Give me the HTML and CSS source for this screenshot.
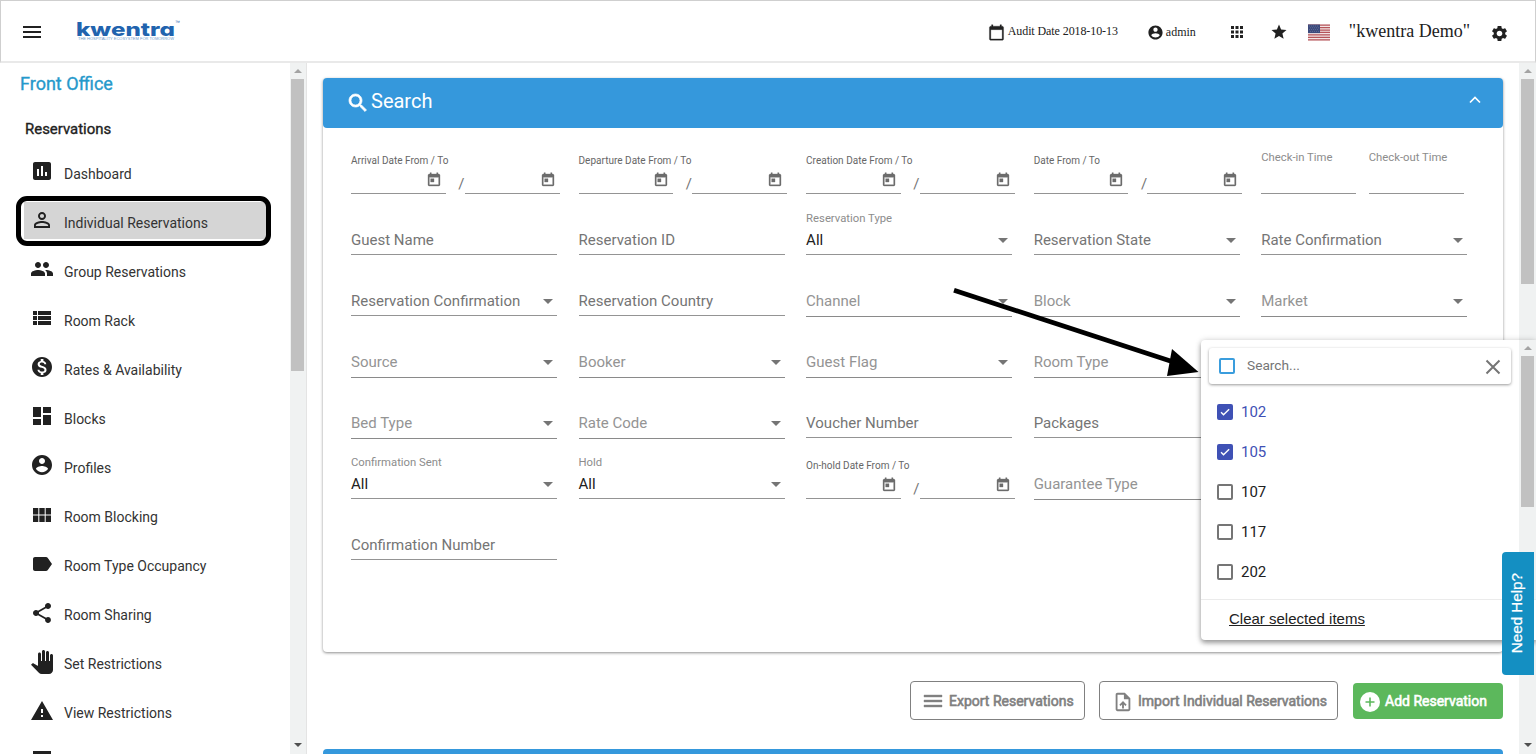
FILE: index.html
```html
<!DOCTYPE html>
<html lang="en">
<head>
<meta charset="utf-8">
<title>kwentra - Individual Reservations</title>
<link rel="stylesheet" href="styles.css">
</head>
<body>
<svg class="defs" aria-hidden="true">
  <symbol id="menu" viewBox="0 0 24 24"><path d="M3 18h18v-2H3v2zm0-5h18v-2H3v2zm0-7v2h18V6H3z"/></symbol>
  <symbol id="calendar" viewBox="0 0 24 24"><path d="M20 3h-1V1h-2v2H7V1H5v2H4c-1.1 0-2 .9-2 2v16c0 1.1.9 2 2 2h16c1.1 0 2-.9 2-2V5c0-1.1-.9-2-2-2zm0 18H4V8h16v13z"/></symbol>
  <symbol id="today" viewBox="0 0 24 24"><path d="M19 3h-1V1h-2v2H8V1H6v2H5c-1.11 0-2 .9-2 2v14c0 1.1.89 2 2 2h14c1.1 0 2-.9 2-2V5c0-1.1-.9-2-2-2zm0 16H5V8h14v11zM7 10h5v5H7z"/></symbol>
  <symbol id="account" viewBox="0 0 24 24"><path d="M12 2C6.48 2 2 6.480 2 12s4.480 10 10 10 10-4.480 10-10S17.520 2 12 2zm0 3c1.660 0 3 1.340 3 3s-1.340 3-3 3-3-1.340-3-3 1.340-3 3-3zm0 14.200c-2.500 0-4.710-1.280-6-3.220.03-1.990 4-3.080 6-3.080 1.990 0 5.970 1.090 6 3.080-1.290 1.940-3.500 3.220-6 3.220z"/></symbol>
  <symbol id="apps" viewBox="0 0 24 24"><path d="M4 8h4V4H4v4zm6 12h4v-4h-4v4zm-6 0h4v-4H4v4zm0-6h4v-4H4v4zm6 0h4v-4h-4v4zm6-10v4h4V4h-4zm-6 4h4V4h-4v4zm6 6h4v-4h-4v4zm0 6h4v-4h-4v4z"/></symbol>
  <symbol id="star" viewBox="0 0 24 24"><path d="M12 17.270L18.180 21l-1.640-7.030L22 9.240l-7.190-.61L12 2 9.190 8.630 2 9.240l5.460 4.730L5.820 21z"/></symbol>
  <symbol id="gear" viewBox="0 0 24 24"><path d="M19.140 12.940c.04-.3.06-.61.06-.94 0-.32-.02-.64-.07-.94l2.030-1.580c.18-.14.23-.41.12-.61l-1.920-3.320c-.12-.22-.37-.29-.59-.22l-2.390.96c-.5-.38-1.030-.7-1.620-.94l-.36-2.540c-.04-.24-.24-.41-.48-.41h-3.840c-.24 0-.43.17-.47.41l-.36 2.540c-.59.24-1.130.57-1.620.94l-2.390-.96c-.22-.08-.47 0-.59.22L2.740 8.870c-.12.21-.08.47.12.61l2.030 1.580c-.05.3-.09.63-.09.94s.02.64.07.94l-2.030 1.580c-.18.14-.23.41-.12.61l1.920 3.320c.12.22.37.29.59.22l2.390-.96c.5.38 1.030.7 1.620.94l.36 2.540c.05.24.24.41.48.41h3.840c.24 0 .44-.17.47-.41l.36-2.540c.59-.24 1.130-.56 1.620-.94l2.390.96c.22.08.47 0 .59-.22l1.920-3.320c.12-.22.07-.47-.12-.61l-2.010-1.580zM12 15.600c-1.980 0-3.600-1.620-3.600-3.600s1.620-3.600 3.600-3.600 3.600 1.620 3.600 3.600-1.620 3.600-3.600 3.600z"/></symbol>
  <symbol id="chart" viewBox="0 0 24 24"><path d="M19 3H5c-1.100 0-2 .9-2 2v14c0 1.100.9 2 2 2h14c1.100 0 2-.9 2-2V5c0-1.100-.9-2-2-2zM9 17H7v-7h2v7zm4 0h-2V7h2v10zm4 0h-2v-4h2v4z"/></symbol>
  <symbol id="person" viewBox="0 0 24 24"><path d="M12 5.900a2.100 2.100 0 1 1 0 4.200 2.100 2.100 0 0 1 0-4.200m0 9c2.970 0 6.100 1.460 6.100 2.100v1.100H5.900V17c0-.64 3.130-2.100 6.100-2.100M12 4C9.790 4 8 5.790 8 8s1.790 4 4 4 4-1.790 4-4-1.790-4-4-4zm0 9c-2.670 0-8 1.340-8 4v3h16v-3c0-2.660-5.330-4-8-4z"/></symbol>
  <symbol id="group" viewBox="0 0 24 24"><path d="M16 11c1.660 0 2.990-1.340 2.990-3S17.660 5 16 5s-3 1.340-3 3 1.340 3 3 3zm-8 0c1.660 0 2.990-1.340 2.990-3S9.660 5 8 5 5 6.340 5 8s1.340 3 3 3zm0 2c-2.330 0-7 1.170-7 3.500V19h14v-2.500c0-2.330-4.670-3.500-7-3.500zm8 0c-.29 0-.62.02-.97.05 1.160.84 1.970 1.970 1.970 3.450V19h6v-2.500c0-2.330-4.670-3.500-7-3.500z"/></symbol>
  <symbol id="rack" viewBox="0 0 24 24"><path d="M3 9h4V5H3v4zm0 5h4v-4H3v4zm5 0h13v-4H8v4zM3 19h4v-4H3v4zm5 0h13v-4H8v4zM8 5v4h13V5H8z"/></symbol>
  <symbol id="money" viewBox="0 0 24 24"><path d="M12 2C6.480 2 2 6.480 2 12s4.480 10 10 10 10-4.480 10-10S17.520 2 12 2zm1.410 16.090V20h-2.670v-1.930c-1.710-.36-3.160-1.460-3.270-3.400h1.960c.1 1.050.82 1.870 2.650 1.870 1.960 0 2.400-.98 2.400-1.590 0-.83-.44-1.610-2.670-2.140-2.480-.6-4.180-1.620-4.180-3.670 0-1.720 1.390-2.840 3.110-3.210V4h2.670v1.950c1.860.45 2.790 1.860 2.850 3.390H14.300c-.05-1.110-.64-1.870-2.220-1.870-1.500 0-2.400.68-2.400 1.640 0 .84.65 1.390 2.670 1.910s4.180 1.390 4.180 3.910c-.01 1.830-1.380 2.830-3.120 3.160z"/></symbol>
  <symbol id="blocks" viewBox="0 0 24 24"><path d="M3 13h8V3H3v10zm0 8h8v-6H3v6zm10 0h8V11h-8v10zm0-18v6h8V3h-8z"/></symbol>
  <symbol id="module" viewBox="0 0 24 24"><path d="M3 11.500h5.300V5H3v6.500zM3 19h5.300v-6.500H3V19zm6.300 0h5.400v-6.500H9.300V19zm6.400 0H21v-6.500h-5.300V19zm-6.400-7.500h5.400V5H9.300v6.500zM15.700 5v6.500H21V5h-5.300z"/></symbol>
  <symbol id="label" viewBox="0 0 24 24"><path d="M17.630 5.840C17.270 5.330 16.670 5 16 5L5 5.010C3.900 5.010 3 5.900 3 7v10c0 1.100.9 1.990 2 1.990L16 19c.67 0 1.270-.33 1.630-.84L22 12l-4.370-6.160z"/></symbol>
  <symbol id="share" viewBox="0 0 24 24"><path d="M18 16.080c-.76 0-1.440.3-1.960.77L8.910 12.700c.05-.23.09-.46.09-.7s-.04-.47-.09-.7l7.050-4.110c.54.5 1.250.81 2.040.81 1.660 0 3-1.340 3-3s-1.340-3-3-3-3 1.340-3 3c0 .24.04.47.09.7L8.040 9.810C7.500 9.310 6.790 9 6 9c-1.660 0-3 1.340-3 3s1.340 3 3 3c.79 0 1.500-.31 2.040-.81l7.120 4.160c-.05.21-.08.43-.08.65 0 1.610 1.310 2.920 2.920 2.920s2.920-1.310 2.920-2.920-1.310-2.920-2.920-2.920z"/></symbol>
  <symbol id="hand" viewBox="0 0 24 24"><path d="M23 5.500V20c0 2.200-1.800 4-4 4h-7.300c-1.080 0-2.100-.43-2.850-1.190L1 14.830s1.260-1.230 1.300-1.250c.22-.19.49-.29.79-.29.22 0 .42.06.6.16.04.01 4.310 2.460 4.310 2.460V4c0-.83.67-1.500 1.500-1.500S11 3.170 11 4v7h1V1.500c0-.83.67-1.500 1.500-1.500S15 .67 15 1.500V11h1V2.500c0-.83.67-1.500 1.500-1.500s1.500.67 1.500 1.500V11h1V5.500c0-.83.67-1.500 1.500-1.500s1.500.67 1.500 1.500z"/></symbol>
  <symbol id="warning" viewBox="0 0 24 24"><path d="M1 21h22L12 2 1 21zm12-3h-2v-2h2v2zm0-4h-2v-4h2v4z"/></symbol>
  <symbol id="sheet" viewBox="0 0 24 24"><path d="M3 3h18v18H3z"/></symbol>
  <symbol id="search" viewBox="0 0 24 24"><path d="M15.500 14h-.79l-.28-.27C15.410 12.590 16 11.110 16 9.500 16 5.910 13.090 3 9.500 3S3 5.910 3 9.500 5.910 16 9.500 16c1.610 0 3.090-.59 4.230-1.570l.27.28v.79l5 4.990L20.490 19l-4.990-5zm-6 0C7.010 14 5 11.990 5 9.500S7.010 5 9.500 5 14 7.010 14 9.500 11.990 14 9.500 14z"/></symbol>
  <symbol id="upload" viewBox="0 0 24 24"><path d="M14 2H6c-1.100 0-2 .9-2 2v16c0 1.100.9 2 2 2h12c1.100 0 2-.9 2-2V8l-6-6zm4 18H6V4h7v5h5v11zM8 15.010l1.410 1.410L11 14.840V19h2v-4.160l1.590 1.590L16 15.010 12.010 11z"/></symbol>
  <symbol id="check" viewBox="0 0 24 24"><path d="M4.100 12.700 9 17.600 20.300 6.300" fill="none" stroke="#fff" stroke-width="2.800"/></symbol>
</svg>

<header class="topbar">
  <svg class="topbar-menu"><use href="#menu"/></svg>
  <svg class="logo" viewBox="0 0 106 22">
    <text class="logo-name" x="0" y="15.500" textLength="99" lengthAdjust="spacingAndGlyphs">kwentra</text>
    <text class="logo-tm" x="99" y="4">™</text>
    <text class="logo-tag" x="2" y="19.500" textLength="96" lengthAdjust="spacingAndGlyphs">THE HOSPITALITY ECOSYSTEM FOR TOMORROW</text>
  </svg>
  <div class="topbar-date"><svg><use href="#calendar"/></svg><span>Audit Date 2018-10-13</span></div>
  <div class="topbar-user"><svg><use href="#account"/></svg><span>admin</span></div>
  <svg class="topbar-apps"><use href="#apps"/></svg>
  <svg class="topbar-star"><use href="#star"/></svg>
  <svg class="flag" viewBox="0 0 22 16">
    <rect width="22" height="16" fill="#f3e4e4"/>
    <path d="M0 .6h22M0 3.060h22M0 5.520h22M0 7.980h22M0 10.440h22M0 12.900h22M0 15.400h22" stroke="#b5545a" stroke-width="1.230"/>
    <rect width="12" height="8.600" fill="#3c4a7c"/>
    <path d="M1 1.500h10M2 3.300h9M1 5.100h10M2 6.900h9" stroke="#7984aa" stroke-width=".7" stroke-dasharray=".8 1.200"/>
  </svg>
  <span class="hotel">"kwentra Demo"</span>
  <svg class="topbar-gear"><use href="#gear"/></svg>
</header>

<div class="layout">
  <nav class="sidebar">
    <h1 class="side-title">Front Office</h1>
    <h2 class="side-group">Reservations</h2>
    <ul class="side-list">
      <li class="side-item"><svg><use href="#chart"/></svg><span>Dashboard</span></li>
      <li class="side-item active"><svg><use href="#person"/></svg><span>Individual Reservations</span></li>
      <li class="side-item"><svg><use href="#group"/></svg><span>Group Reservations</span></li>
      <li class="side-item"><svg><use href="#rack"/></svg><span>Room Rack</span></li>
      <li class="side-item"><svg><use href="#money"/></svg><span>Rates &amp; Availability</span></li>
      <li class="side-item"><svg><use href="#blocks"/></svg><span>Blocks</span></li>
      <li class="side-item"><svg><use href="#account"/></svg><span>Profiles</span></li>
      <li class="side-item"><svg><use href="#module"/></svg><span>Room Blocking</span></li>
      <li class="side-item"><svg><use href="#label"/></svg><span>Room Type Occupancy</span></li>
      <li class="side-item"><svg><use href="#share"/></svg><span>Room Sharing</span></li>
      <li class="side-item"><svg><use href="#hand"/></svg><span>Set Restrictions</span></li>
      <li class="side-item"><svg><use href="#warning"/></svg><span>View Restrictions</span></li>
      <li class="side-item"><svg><use href="#sheet"/></svg></li>
    </ul>
  </nav>
  <div class="scrollbar side-scroll"><i class="up"></i><i class="thumb"></i><i class="down"></i></div>

  <main class="content">
    <section class="card">
      <div class="card-head">
        <svg class="card-icon"><use href="#search"/></svg><span>Search</span>
        <svg class="chevron" viewBox="0 0 12 8"><path d="M1 6.500 6 1.500l5 5" fill="none" stroke="#fff" stroke-width="1.700"/></svg>
      </div>
      <div class="form">
        <div class="dates"><span class="caption">Arrival Date From / To</span><div class="range"><div class="day"><svg><use href="#today"/></svg></div><b>/</b><div class="day"><svg><use href="#today"/></svg></div></div></div>
        <div class="dates"><span class="caption">Departure Date From / To</span><div class="range"><div class="day"><svg><use href="#today"/></svg></div><b>/</b><div class="day"><svg><use href="#today"/></svg></div></div></div>
        <div class="dates"><span class="caption">Creation Date From / To</span><div class="range"><div class="day"><svg><use href="#today"/></svg></div><b>/</b><div class="day"><svg><use href="#today"/></svg></div></div></div>
        <div class="dates"><span class="caption">Date From / To</span><div class="range"><div class="day"><svg><use href="#today"/></svg></div><b>/</b><div class="day"><svg><use href="#today"/></svg></div></div></div>
        <div class="times"><div class="time"><span class="float">Check-in Time</span></div><div class="time"><span class="float">Check-out Time</span></div></div>

        <div class="field"><span>Guest Name</span></div>
        <div class="field"><span>Reservation ID</span></div>
        <div class="field select filled"><span class="float">Reservation Type</span><span>All</span></div>
        <div class="field select"><span>Reservation State</span></div>
        <div class="field select"><span>Rate Confirmation</span></div>

        <div class="field select"><span>Reservation Confirmation</span></div>
        <div class="field"><span>Reservation Country</span></div>
        <div class="field select auto"><span>Channel</span></div>
        <div class="field select auto"><span>Block</span></div>
        <div class="field select auto"><span>Market</span></div>

        <div class="field select auto"><span>Source</span></div>
        <div class="field select auto"><span>Booker</span></div>
        <div class="field select auto"><span>Guest Flag</span></div>
        <div class="field select auto"><span>Room Type</span></div>
        <div class="field select auto"></div>

        <div class="field select auto"><span>Bed Type</span></div>
        <div class="field select auto"><span>Rate Code</span></div>
        <div class="field"><span>Voucher Number</span></div>
        <div class="field"><span>Packages</span></div>
        <div class="field"></div>

        <div class="field select filled"><span class="float">Confirmation Sent</span><span>All</span></div>
        <div class="field select filled"><span class="float">Hold</span><span>All</span></div>
        <div class="dates"><span class="caption">On-hold Date From / To</span><div class="range"><div class="day"><svg><use href="#today"/></svg></div><b>/</b><div class="day"><svg><use href="#today"/></svg></div></div></div>
        <div class="field auto"><span>Guarantee Type</span></div>
        <div class="field"></div>

        <div class="field"><span>Confirmation Number</span></div>
      </div>
    </section>
    <div class="actions">
      <button class="btn export"><svg><use href="#menu"/></svg>Export Reservations</button>
      <button class="btn import"><svg><use href="#upload"/></svg>Import Individual Reservations</button>
      <button class="btn add"><svg viewBox="0 0 20 20"><circle cx="10" cy="10" r="10" fill="#fff"/><path d="M10 5.500v9M5.500 10h9" stroke="#5cb85c" stroke-width="1.600"/></svg>Add Reservation</button>
    </div>
    <section class="results-head"></section>
  </main>
  <div class="scrollbar main-scroll"><i class="up"></i><i class="thumb"></i><i class="down"></i></div>
</div>

<div class="panel">
  <div class="panel-body">
    <div class="panel-main">
      <div class="panel-search">
        <i class="box all"></i><span>Search...</span>
        <svg viewBox="0 0 16 16"><path d="M1.500 1.500l13 13M14.500 1.500l-13 13" stroke="#757575" stroke-width="2"/></svg>
      </div>
      <div class="option on"><i class="box"><svg><use href="#check"/></svg></i>102</div>
      <div class="option on"><i class="box"><svg><use href="#check"/></svg></i>105</div>
      <div class="option"><i class="box"></i>107</div>
      <div class="option"><i class="box"></i>117</div>
      <div class="option"><i class="box"></i>202</div>
    </div>
    <div class="scrollbar panel-scroll"><i class="up"></i><i class="thumb"></i></div>
  </div>
  <div class="panel-foot"><a>Clear selected items</a></div>
</div>

<div class="help"><span>Need Help?</span></div>
<div class="ring"></div>
<svg class="arrow" viewBox="0 0 250 96"><path d="M5 6.300 226 78.500" stroke="#000" stroke-width="4.800"/><path d="M223 65 249.500 88 218 92z"/></svg>
</body>
</html>
```
FILE: styles.css
```css
* { box-sizing: border-box; }
body {
  margin: 0;
  height: 754px;
  overflow: hidden;
  display: flex;
  flex-direction: column;
  background: #fff;
  font-family: Roboto, "Liberation Sans", sans-serif;
  color: #212121;
}
svg { fill: currentColor; flex: none; display: block; }
.defs { position: absolute; width: 0; height: 0; }

/* Top bar */
.topbar {
  height: 63px;
  flex: none;
  display: flex;
  align-items: center;
  border: 1px solid #cfcfcf;
  border-bottom: 2px solid #e9e9e9;
  font-family: "Liberation Serif", serif;
  font-size: 12px;
}
.topbar-menu { width: 24px; height: 24px; margin-left: 19px; margin-top: 2px; }
.logo { width: 106px; height: 22px; margin-left: 32px; margin-top: -1px; overflow: visible; }
.logo-name { font: 800 18.500px Inter, "DejaVu Sans", sans-serif; font-feature-settings: "cv11"; fill: #2163ae; }
.logo-tm { font: 5px "Liberation Sans", sans-serif; fill: #2163ae; }
.logo-tag { font: 3.600px "Liberation Sans", sans-serif; fill: #6f9bcb; }
.topbar-date { display: flex; align-items: center; gap: 3px; margin-left: auto; }
.topbar-date svg { width: 17px; height: 17px; margin-top: 2px; stroke: currentColor; stroke-width: .4px; }
.topbar-date span { letter-spacing: -.09px; margin-top: 1px; }
.topbar-user { display: flex; align-items: center; gap: 2px; margin-left: 29px; margin-top: 2px; }
.topbar-user svg { width: 17px; height: 17px; }
.topbar-apps { width: 18px; height: 18px; margin-left: 32px; margin-top: 1px; }
.topbar-star { width: 18px; height: 18px; margin-left: 24px; margin-top: 2px; }
.flag { width: 22px; height: 17px; margin-left: 20px; margin-top: 2px; }
.hotel { font-size: 18px; margin-left: 19px; }
.topbar-gear { width: 19px; height: 19px; margin: 5px 26px 0 20px; }

.layout { flex: 1; min-height: 0; display: flex; }

/* Sidebar */
.sidebar { width: 290px; flex: none; overflow: hidden; }
.side-title {
  margin: 10px 0 0 20px;
  font: 400 18px/22px Roboto, sans-serif;
  color: #2699cb;
  -webkit-text-stroke: .35px;
}
.side-group { margin: 24px 0 0 25px; font: 400 14.950px/20px Roboto, sans-serif; -webkit-text-stroke: .35px; }
.side-list { list-style: none; margin: 14px 0 0 24px; padding: 0; }
.side-item {
  height: 37px;
  width: 242px;
  margin-bottom: 12.080px;
  padding-left: 6px;
  display: flex;
  align-items: center;
  gap: 10px;
  font-size: 14px;
  color: #333;
}
.side-item svg { width: 24px; height: 24px; color: #212121; margin-top: -1px; }
.side-item span { padding-top: 4px; }
.side-item.active { background: #d5d5d5; }

/* Scrollbars */
.scrollbar { width: 16px; flex: none; background: #f0f2f2; display: flex; flex-direction: column; align-items: center; }
.side-scroll { width: 17px; border-right: 1px solid #e4e4e4; padding-right: 1px; }
.main-scroll { width: 17px; }
.scrollbar .up { margin: 6px 0; border: 4px solid transparent; border-top: 0; border-bottom: 4px solid #a3a3a3; height: 4px; }
.scrollbar .down { margin: auto 0 7px; border: 4px solid transparent; border-bottom: 0; border-top: 4px solid #505050; }
.scrollbar .thumb { width: 13px; background: #c1c1c1; }
.side-scroll .thumb { height: 292px; }
.main-scroll .thumb { height: 205px; }

/* Content */
.content { flex: 1; min-width: 0; padding: 15px 16px 0; overflow: hidden; }
.card { height: 574px; border-radius: 4px; box-shadow: 0 1px 3px rgba(0,0,0,.45); }
.card-head {
  height: 50px;
  padding: 0 22px 0 26px;
  display: flex;
  align-items: center;
  background: #3598dc;
  border-radius: 4px;
  color: #fff;
  font-size: 20px;
}
.card-icon { width: 24px; height: 24px; margin: 0 -2px 0 -3px; stroke: #fff; stroke-width: .7px; }
.card-head span { margin-top: -4px; margin-left: 3px; }
.chevron { width: 12px; height: 8px; margin-left: auto; margin-top: -6px; }
.form {
  padding: 5px 28px 0;
  display: grid;
  grid-template-columns: repeat(5, 206px);
  grid-auto-rows: 61px;
  column-gap: 21.560px;
}
.field {
  position: relative;
  display: flex;
  align-items: flex-end;
  padding-bottom: 4px;
  border-bottom: 1px solid #949494;
  font-size: 15px;
  line-height: 20px;
  color: #757575;
}
.auto { margin-bottom: -1px; padding-bottom: 5px; color: #949494; border-color: #8a8a8a; }
.filled { color: #212121; }
.select::after {
  content: "";
  margin: 0 4px 7px auto;
  border: 5px solid transparent;
  border-bottom: 0;
  border-top-color: #757575;
}
.float {
  position: absolute;
  left: 0;
  bottom: 28px;
  font-size: 11.300px;
  line-height: 14px;
  color: #8c8c8c;
}
.dates { display: flex; flex-direction: column; padding-top: 21px; }
.caption { font-size: 10px; line-height: 14px; color: #666; letter-spacing: .01px; }
.range { flex: 1; display: flex; width: 208.500px; }
.range b { width: 19px; padding: 7px 0 0 12.500px; font: 400 15px/18px Roboto, sans-serif; color: #757575; }
.range .day { width: 94.750px; border-bottom: 1px solid #949494; display: flex; justify-content: flex-end; padding: 4px 4px 0 0; }
.day svg { width: 16px; height: 16px; color: #6c6c6c; stroke: currentColor; stroke-width: .5px; }
.times { display: flex; gap: 12.500px; }
.time { position: relative; width: 95px; border-bottom: 1px solid #949494; }

.actions { display: flex; justify-content: flex-end; align-items: center; margin-top: 29px; }
.btn {
  height: 39px;
  display: flex;
  align-items: center;
  border: 1px solid #808080;
  border-radius: 4px;
  background: #fff;
  color: #808080;
  font: 400 14px Roboto, sans-serif;
  -webkit-text-stroke: .6px;
  padding: 0;
  white-space: nowrap;
}
.btn svg { stroke: none; -webkit-text-stroke: 0; }
.export { width: 175px; padding-left: 10px; margin-right: 14px; }
.export svg { width: 24px; height: 24px; margin-right: 4px; margin-top: 1px; stroke: currentColor; stroke-width: .4px; }
.import { width: 239px; padding-left: 12px; margin-right: 15px; }
.import svg { width: 22px; height: 22px; margin-right: 4px; margin-top: 2px; }
.add { width: 150px; height: 36px; padding-left: 7px; border: 0; background: #5cb85c; color: #fff; margin-top: 1px; }
.add svg { width: 20px; height: 20px; margin-right: 5px; margin-top: 2px; }
.results-head { height: 50px; margin-top: 29px; background: #3598dc; border-radius: 4px; }

/* Room dropdown, laid over the form */
.panel {
  position: absolute;
  left: 1201px;
  top: 340px;
  width: 335px;
  height: 300px;
  background: #fff;
  border-radius: 4px 0 0 4px;
  box-shadow: 0 3px 5px rgba(0,0,0,.35), 0 0 6px rgba(0,0,0,.15);
}
.panel-body { height: 260px; display: flex; border-bottom: 1px solid #ebebeb; }
.panel-main { flex: 1; padding-top: 8px; }
.panel-search {
  height: 36px;
  margin: 0 8px 8px;
  padding: 0 10px;
  display: flex;
  align-items: center;
  border-radius: 3px;
  box-shadow: 0 1px 3px rgba(0,0,0,.4);
  font-size: 13.700px;
  color: #757575;
}
.panel-search span { margin-top: -2px; }
.panel-search svg { width: 16px; height: 16px; margin-left: auto; margin-top: 2px; }
.box { width: 16px; height: 16px; border: 2px solid #757575; border-radius: 2px; flex: none; }
.box.all { border-color: #3a9ddd; margin-right: 12px; }
.panel-scroll .thumb { height: 151px; }
.panel-scroll { width: 17px; }
.option { height: 40px; padding-left: 16px; display: flex; align-items: center; gap: 8px; font-size: 15px; }
.option.on { color: #3f51b5; }
.option.on .box { background: #3f51b5; border-color: #3f51b5; }
.option.on .box svg { width: 12px; height: 12px; }
.panel-foot { padding: 10px 0 0 28px; font: 15px/18px "Liberation Sans", sans-serif; }
.panel-foot a { text-decoration: underline; }

/* Floating overlays */
.help {
  position: absolute;
  left: 1502px;
  top: 552px;
  width: 32px;
  height: 123px;
  display: flex;
  align-items: center;
  justify-content: center;
  padding-right: 3px;
  background: #148fc2;
  border-radius: 4px 0 0 4px;
  color: #fff;
  font: 15.200px "Liberation Sans", sans-serif;
}
.help span { writing-mode: vertical-rl; transform: rotate(180deg); -webkit-text-stroke: .25px; }
.ring { position: absolute; left: 16px; top: 196px; width: 255px; height: 50px; border: 5px solid #000; border-radius: 11px; }
.arrow { position: absolute; left: 949px; top: 284px; width: 250px; height: 96px; color: #000; }
```
